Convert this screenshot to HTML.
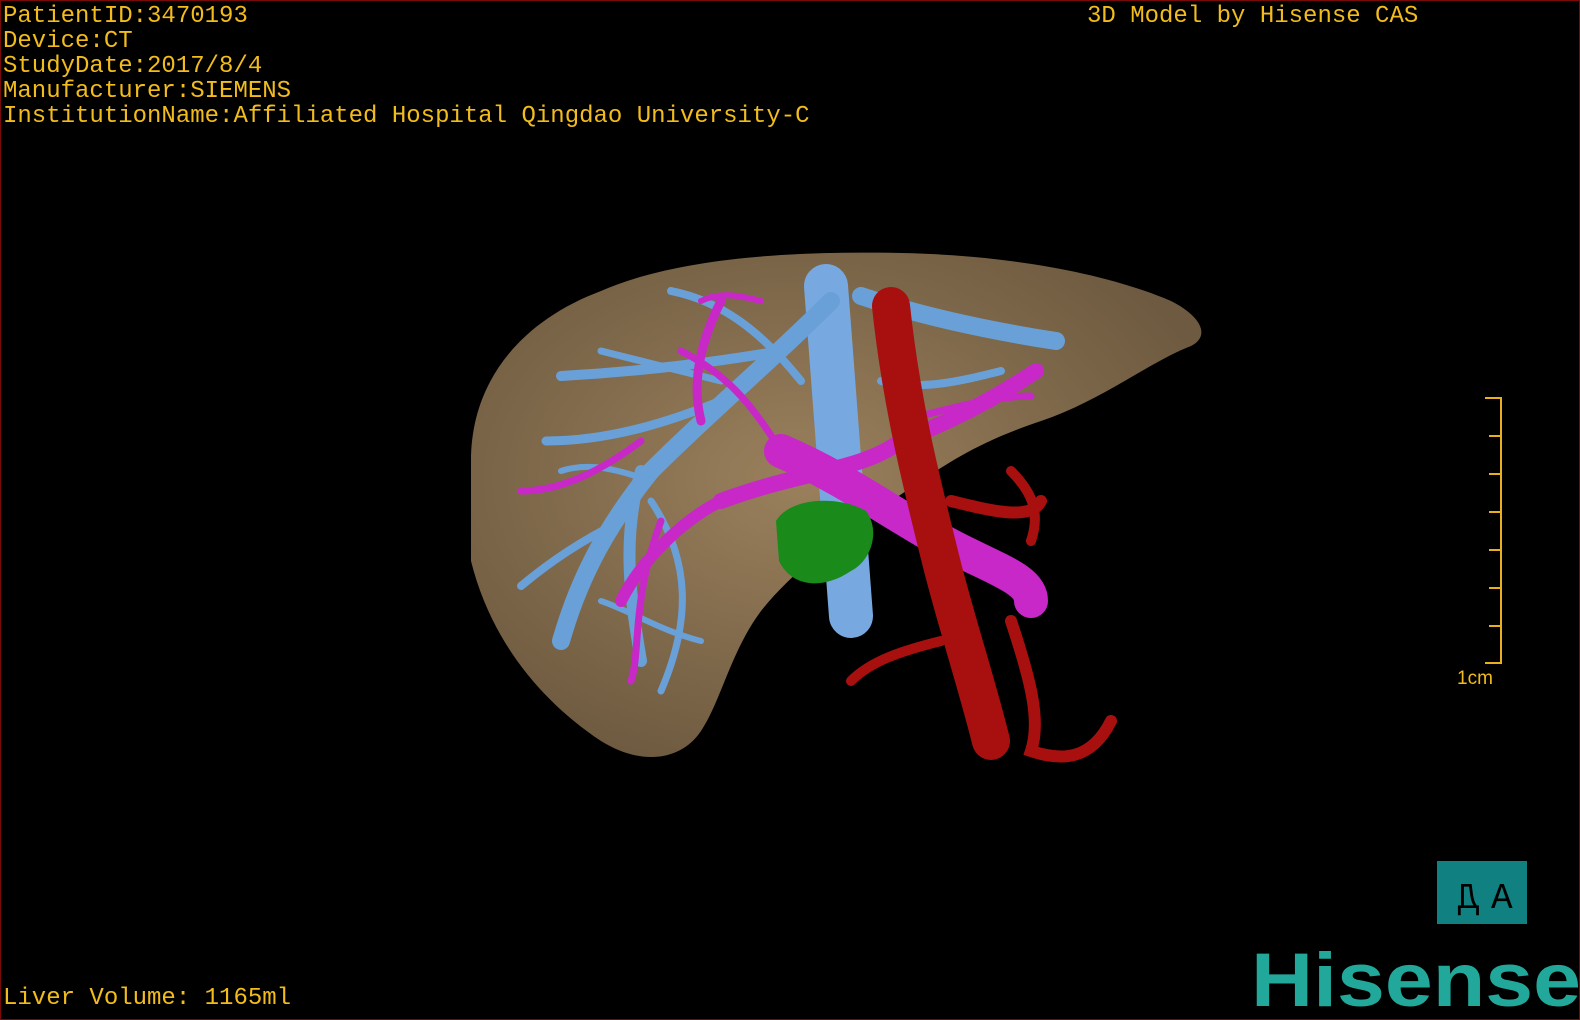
<!DOCTYPE html>
<html><head><meta charset="utf-8"><style>
html,body{margin:0;padding:0;background:#000;}
#c{position:relative;width:1580px;height:1020px;background:#000;overflow:hidden;box-sizing:border-box;border:1px solid #7a0a0a;}
.t{position:absolute;color:#f2bc1c;font-family:"Liberation Mono",monospace;font-size:24px;line-height:25px;white-space:pre;}
</style></head><body><div id="c">
<div class="t" style="left:2px;top:3px">PatientID:3470193
Device:CT
StudyDate:2017/8/4
Manufacturer:SIEMENS
InstitutionName:Affiliated Hospital Qingdao University-C</div>
<div class="t" style="left:1086px;top:3px">3D Model by Hisense CAS</div>
<div class="t" style="left:2px;top:985px">Liver Volume: 1165ml</div>
<svg width="1580" height="1020" style="position:absolute;left:0;top:0">
<defs><radialGradient id="lv" cx="45%" cy="45%" r="60%"><stop offset="0" stop-color="#9a805c"/><stop offset="1" stop-color="#6e5a40"/></radialGradient></defs>
<path d="M470,460 C470,380 520,320 600,290 C680,255 800,250 900,252 C1000,254 1100,270 1170,300 C1200,315 1210,335 1190,345 C1150,360 1100,400 1040,420 C980,440 950,460 920,480 C860,520 800,560 760,610 C730,650 720,700 700,730 C680,760 640,765 600,740 C540,700 490,640 470,560 Z" fill="url(#lv)"/>
<g fill="none" stroke="#6aa0d8" stroke-linecap="round">
<path d="M825,285 L850,615" stroke-width="44" stroke="#78a8e0"/>
<path d="M830,300 C770,360 710,410 650,470 C610,520 580,570 560,640" stroke-width="18"/>
<path d="M780,350 C720,360 650,370 560,375" stroke-width="10"/>
<path d="M720,400 C670,420 610,440 545,440" stroke-width="9"/>
<path d="M640,470 C620,540 630,600 640,660" stroke-width="12"/>
<path d="M620,520 C580,540 550,560 520,585" stroke-width="8"/>
<path d="M860,295 C920,315 990,330 1055,340" stroke-width="18"/>
<path d="M800,380 C760,330 720,300 670,290" stroke-width="8"/>
<path d="M650,500 C690,560 690,620 660,690" stroke-width="7"/>
<path d="M600,350 C640,360 680,370 720,380" stroke-width="7"/>
<path d="M560,470 C590,460 620,470 650,480" stroke-width="6"/>
<path d="M600,600 C630,610 660,630 700,640" stroke-width="6"/>
<path d="M880,380 C920,390 960,380 1000,370" stroke-width="8"/>
</g>
<g fill="none" stroke="#c828c8" stroke-linecap="round">
<path d="M720,500 C800,470 860,470 900,440 C950,420 990,400 1035,370" stroke-width="16"/>
<path d="M780,450 C850,480 900,520 960,550 C1000,570 1030,580 1030,600" stroke-width="34"/>
<path d="M720,500 C680,520 640,560 620,600" stroke-width="12"/>
<path d="M700,420 C690,380 700,340 720,300" stroke-width="9"/>
<path d="M660,520 C630,600 640,650 630,680" stroke-width="7"/>
<path d="M640,440 C600,470 560,490 520,490" stroke-width="7"/>
<path d="M800,480 C760,420 740,380 680,350" stroke-width="7"/>
<path d="M700,300 C720,290 740,295 760,300" stroke-width="6"/>
<path d="M900,420 C940,410 990,395 1030,395" stroke-width="7"/>
</g>
<g fill="none" stroke="#a81010" stroke-linecap="round">
<path d="M890,305 C900,400 920,480 940,560 C955,620 975,680 990,740" stroke-width="38"/>
<path d="M1010,620 C1030,680 1040,720 1030,750 C1060,760 1090,760 1110,720" stroke-width="12"/>
<path d="M940,640 C900,650 870,660 850,680" stroke-width="10"/>
<path d="M950,500 C990,510 1030,520 1040,500" stroke-width="12"/>
<path d="M1010,470 C1030,490 1040,510 1030,540" stroke-width="10"/>
</g>
<path d="M775,520 C790,495 840,495 865,510 C880,530 870,560 850,570 C820,590 790,585 778,560 Z" fill="#1a8a1a"/>
<g stroke="#e8b020" stroke-width="2" fill="none">
<path d="M1484,397 H1500 V662 H1484"/>
<path d="M1488,435H1500M1488,473H1500M1488,511H1500M1488,549H1500M1488,587H1500M1488,625H1500"/>
</g>
<text x="1456" y="683" fill="#f2bc1c" font-family="Liberation Sans,sans-serif" font-size="19">1cm</text>
<rect x="1436" y="860" width="90" height="63" fill="#108080"/>
<text x="1449" y="907" fill="#000" font-family="Liberation Mono,monospace" font-size="36" transform="translate(2927,0) scale(-1,1)">Д</text>
<text x="1490" y="907" fill="#000" font-family="Liberation Mono,monospace" font-size="36">A</text>
<text x="1250" y="1005" fill="#22a89a" font-family="Liberation Sans,sans-serif" font-weight="bold" font-size="76" textLength="330" lengthAdjust="spacingAndGlyphs">Hisense</text>
</svg>
</div></body></html>
